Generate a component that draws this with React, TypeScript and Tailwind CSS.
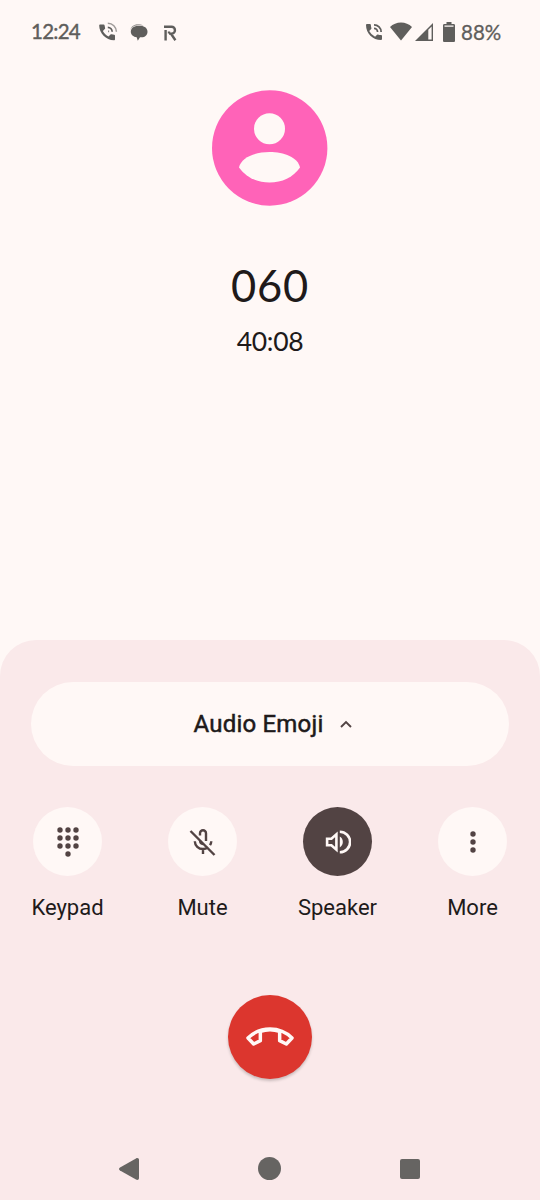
import type { ReactNode } from "react";

function CallIcon({ className }: { className?: string }) {
  return (
    <svg className={className} viewBox="3 3 18 18" fill="currentColor">
      <path d="M20 15.5c-1.25 0-2.45-.2-3.57-.57a1.02 1.02 0 0 0-1.02.24l-2.2 2.2a15.05 15.05 0 0 1-6.59-6.59l2.2-2.21a.96.96 0 0 0 .25-1A11.36 11.36 0 0 1 8.5 4c0-.55-.45-1-1-1H4c-.55 0-1 .45-1 1 0 9.39 7.61 17 17 17 .55 0 1-.45 1-1v-3.5c0-.55-.45-1-1-1z" />
      <path d="M19 12h2a9 9 0 0 0-9-9v2a7 7 0 0 1 7 7z" />
      <path d="M15 12h2a5 5 0 0 0-5-5v2a3 3 0 0 1 3 3z" />
    </svg>
  );
}

function StatusBar() {
  return (
    <div className="flex h-[65px] items-center pl-[31px] text-[#5f5e5c]">
      <span className="mt-[-2px] w-[50px] whitespace-nowrap font-['Lato'] text-[20.5px] tracking-[-0.75px] [-webkit-text-stroke:0.4px]">12:24</span>
      <svg className="ml-[18px] mt-[-2px] h-[19px] w-[19px] shrink-0" viewBox="0 0 19 19" fill="currentColor">
        <path d="M1 2.5h3.6c.6 0 .9.3 1 .9l.5 2.5c.1.5 0 .8-.3 1.1L3.9 9c1.300 2.500 3.300 4.300 5.600 5.500l2-2c.3-.3.7-.4 1.100-.3l2.600.6c.6.1.8.5.8 1v3.500c0 .6-.4 1-1 1C7 18 .2 11.300.2 3.500c0-.6.3-1 .8-1z" />
        <path d="M9.300 9.300h.8M8.800 5.300a4.600 4.600 0 0 1 4.400 4.400" fill="none" stroke="currentColor" strokeWidth="1.700" />
        <path d="M8.800 1.200a8.600 8.600 0 0 1 8.600 8.600" fill="none" stroke="currentColor" strokeWidth="1.500" opacity=".6" />
      </svg>
      <svg className="ml-[12px] h-[17px] w-[18px] shrink-0" viewBox="0 0 18 17" fill="currentColor">
        <path d="M.4 6C1 2.500 4.300.3 7.500.3c2.500 0 4.500.3 6 1.300H7.500C4.300 1.600 1.500 3.400.4 6z" opacity=".65" />
        <path d="M7.500 2h3.500c3.700 0 6.500 2.400 6.500 5.700 0 3.400-2.600 5.600-5.800 5.600H10l-2.200 3.500-1.100-3.600C3.300 12.800.8 10.700.8 7.700.8 4.400 3.700 2 7.500 2z" />
      </svg>
      <svg className="ml-[16px] mt-px h-[16px] w-[13px] shrink-0" viewBox="0 0 13 16" fill="none" stroke="currentColor" strokeWidth="2.400">
        <path d="M0 1.700h7.500a3.400 3.400 0 0 1 0 6.900H5M7 8.800l4.400 6.400M1.600 5v10.500M5 8.600v-2" />
      </svg>
      <CallIcon className="ml-[189px] mt-[-1px] h-[16px] w-[16px] shrink-0" />
      <svg className="ml-[8px] mt-[-2px] h-[19px] w-[22px] shrink-0" viewBox="0 0 22 19" fill="currentColor">
        <path d="M11 18.500 0 5C3 2.200 6.800.6 11 .6S19 2.200 22 5z" />
      </svg>
      <svg className="ml-[3px] mt-[-1px] h-[18px] w-[18px] shrink-0" viewBox="0 0 18 18" fill="currentColor">
        <path fillRule="evenodd" d="M18 0v18H0zM16.600 3.500l-3.300 3.300v9.800h3.300z" />
      </svg>
      <svg className="ml-[10px] mt-[-1px] h-[20px] w-[12px] shrink-0" viewBox="0 0 12 20" fill="currentColor">
        <path fillRule="evenodd" d="M3.500 0h5v2h2c1 0 1.500.5 1.500 1.500v15c0 1-.5 1.500-1.500 1.500h-9C.5 20 0 19.500 0 18.500v-15C0 2.500.5 2 1.500 2h2zM1.500 3.500v1.300h9V3.500z" />
      </svg>
      <span className="ml-[6px] mt-[-1px] font-['Lato'] text-[20.5px] [-webkit-text-stroke:0.3px]">88%</span>
    </div>
  );
}

function KeypadIcon() {
  return (
    <svg className="h-[30px] w-[22px]" viewBox="0 0 22 30" fill="currentColor">
      {[3, 11, 19].map((y) => [3, 11, 19].map((x) => <circle key={`${x}-${y}`} cx={x} cy={y} r="2.700" />))}
      <circle cx="11" cy="27" r="2.700" />
    </svg>
  );
}

function MuteIcon() {
  return (
    <svg className="h-[28px] w-[28px]" viewBox="0 0 28 28" fill="none" stroke="currentColor" strokeWidth="2.400">
      <path d="M11 7.500V5.200a3 3 0 0 1 6 0v7.800" />
      <path d="M5.800 13.200c.2 4.600 3.600 7.800 8.200 7.800 2 0 3.700-.6 5-1.600M22.300 13.200c-.1 1.600-.6 2.900-1.300 4M14 21v5" />
      <path d="m1.500 3 24 24" />
      <path d="M11 12.500c.2 2 1.300 3.500 3 3.500" />
    </svg>
  );
}

function SpeakerIcon() {
  return (
    <svg className="h-[26px] w-[26px]" viewBox="0 0 26 26" fill="none" stroke="currentColor" strokeWidth="2.600">
      <path d="M2.100 9.800h4.300l5-4.500v15.400l-5-4.500H2.100z" />
      <path d="M14.800 2.700a10.300 10.300 0 0 1 0 20.600" />
      <path d="M14.800 7.600c4 2 4 8.800 0 10.800z" fill="currentColor" stroke="none" />
    </svg>
  );
}

function MoreIcon() {
  return (
    <svg className="h-[22px] w-[6px]" viewBox="0 0 6 22" fill="currentColor">
      <circle cx="3" cy="3" r="2.700" />
      <circle cx="3" cy="11" r="2.700" />
      <circle cx="3" cy="19" r="2.700" />
    </svg>
  );
}

function CallAction({ label, active, children }: { label: string; active?: boolean; children: ReactNode }) {
  return (
    <button className="flex flex-col items-center">
      <span
        className={`flex h-[69px] w-[69px] items-center justify-center rounded-full ${
          active ? "bg-[#524343] text-[#fff8f6]" : "bg-[#fff8f6] text-[#524343]"
        }`}
      >
        {children}
      </span>
      <span className="mt-[16px] font-['Roboto'] text-[22px] leading-8 text-[#201a1a]">{label}</span>
    </button>
  );
}

export default function App() {
  return (
    <div className="flex h-[1200px] w-[540px] flex-col overflow-hidden bg-[#fff8f6]">
      <StatusBar />

      {/* Caller */}
      <div className="flex flex-1 flex-col items-center pt-[25px] text-[#201a1a]">
        <svg className="h-[116px] w-[116px]" viewBox="0 0 116 116">
          <circle cx="57.700" cy="58" r="57.700" fill="#ff63b8" />
          <circle cx="57.500" cy="38.700" r="15.500" fill="#fff8f6" />
          <path d="M27 77.500C29 67.500 43 62 57.500 62S86 67.500 88 77.500C81 87.500 70 92.500 57.500 92.500S34 87.500 27 77.500z" fill="#fff8f6" />
        </svg>
        <h1 className="mt-[53px] font-['Lato'] text-[43.5px] leading-[52px] tracking-[0.7px]">060</h1>
        <p className="mt-[13px] font-['Lato'] text-[26.5px] leading-[34px] tracking-[-0.3px]">40:08</p>
      </div>

      {/* Controls */}
      <div className="h-[560px] rounded-t-[36px] bg-[#fae9ea] pt-[42px]">
        <button className="mx-auto flex h-[84px] w-[478px] items-center justify-center rounded-full bg-[#fff8f6] text-[#201a1a]">
          <span className="ml-[6px] font-['Roboto'] text-[24px] tracking-[0.2px] [-webkit-text-stroke:0.5px]">Audio Emoji</span>
          <svg className="ml-[17px] h-[8px] w-[12px]" viewBox="0 0 12 8" fill="none" stroke="#524343" strokeWidth="1.900">
            <path d="m1 7 5-5 5 5" />
          </svg>
        </button>

        <div className="mt-[41px] grid grid-cols-4">
          <CallAction label="Keypad"><KeypadIcon /></CallAction>
          <CallAction label="Mute"><MuteIcon /></CallAction>
          <CallAction label="Speaker" active><SpeakerIcon /></CallAction>
          <CallAction label="More"><MoreIcon /></CallAction>
        </div>

        <button className="mx-auto mt-[71px] flex h-[84px] w-[84px] items-center justify-center rounded-full bg-[#dc362e] shadow-[0_2px_3px_rgba(0,0,0,0.2)]">
          <svg className="mt-[-2px] h-[20px] w-[48px]" viewBox="0 0 144 60" fill="none" stroke="#fff8f6" strokeWidth="10.500" strokeLinejoin="round">
            <path d="M6 36C42 0 102 0 138 36L121 54 101 44V16Q72 6 43 16V44L23 54z" />
          </svg>
        </button>

        {/* Navigation bar */}
        <div className="mt-[78px] flex items-center text-[#666462]">
          <svg className="ml-[119px] h-[22px] w-[20px]" viewBox="0 0 20 22" fill="currentColor">
            <path d="M1 9.500 17 .4c1.500-.8 3-.1 3 1.600v18c0 1.700-1.500 2.400-3 1.600L1 12.500c-1.300-.8-1.300-2.200 0-3z" />
          </svg>
          <span className="ml-[119px] h-[23px] w-[23px] rounded-full bg-[#666462]" />
          <span className="ml-[119px] h-[20px] w-[20px] rounded-[2px] bg-[#666462]" />
        </div>
      </div>
    </div>
  );
}
